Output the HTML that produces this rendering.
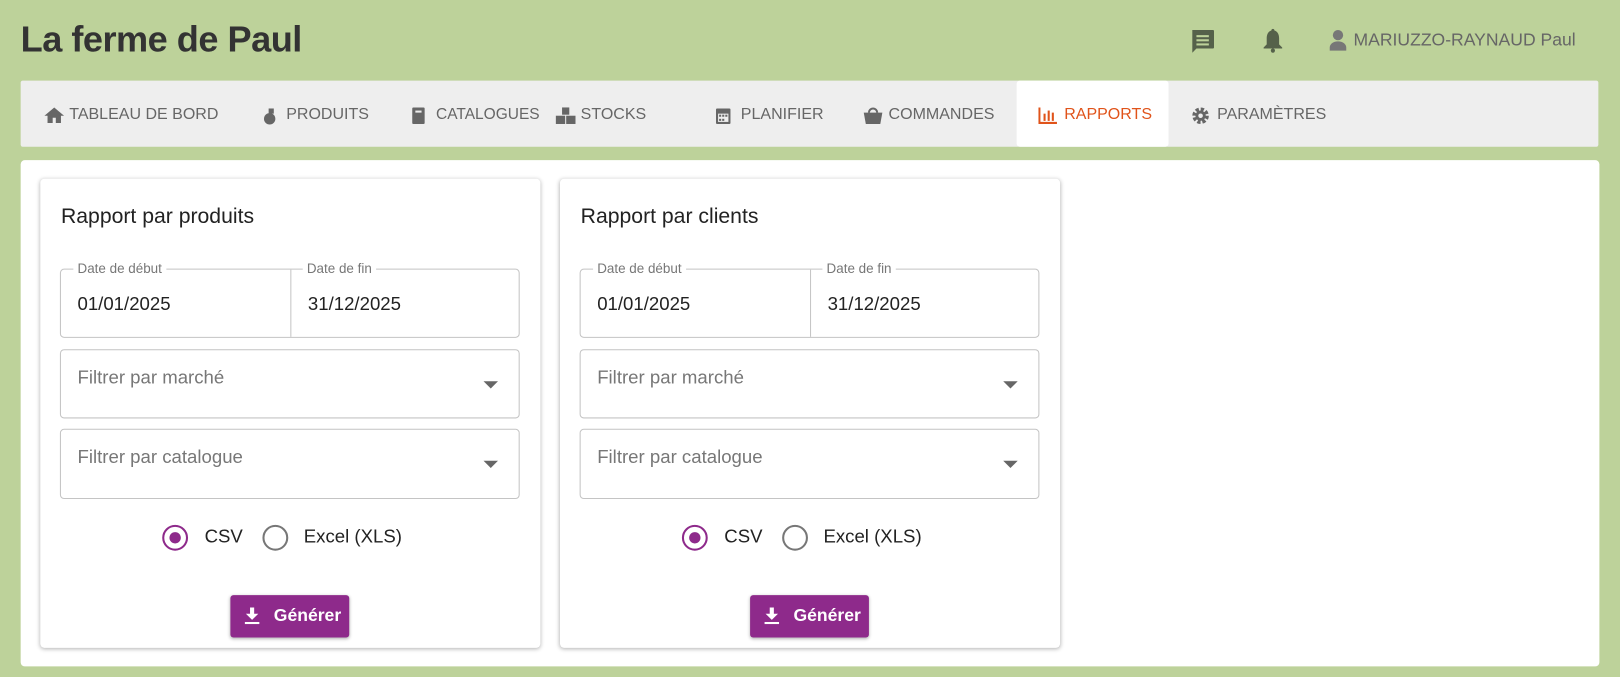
<!DOCTYPE html>
<html><head><meta charset="utf-8"><style>
*{box-sizing:border-box;margin:0;padding:0}
body{width:1620px;height:677px;background:#bdd29a;font-family:"Liberation Sans",sans-serif;position:relative;overflow:hidden;color:#333}
#w{position:absolute;left:0;top:0;width:1568px;height:655px;transform:scale(1.0332);transform-origin:0 0}
.title{position:absolute;left:20px;top:19px;font-size:35px;font-weight:bold;color:#333;letter-spacing:-0.5px}
.user{position:absolute;left:1286px;top:28px;font-size:17px;color:#666;display:flex;align-items:center;gap:6px}
.nav{position:absolute;left:20px;top:78px;width:1527px;height:64px;background:#eee;border-radius:2px}
.act{position:absolute;left:984px;top:78px;width:147px;height:64px;background:#fff;border-radius:3px}
.ni{position:absolute;top:102px;font-size:15.5px;color:#666;display:flex;align-items:center;white-space:nowrap}
.ni svg{position:absolute;left:-25px;top:1px}
.panel{position:absolute;left:20px;top:155px;width:1528px;height:490px;background:#fff;border-radius:4px}
.card{position:absolute;top:173px;width:484px;height:454px;background:#fff;border-radius:4px;box-shadow:0 1px 4px rgba(0,0,0,.3)}
.ct{position:absolute;left:20px;top:25px;font-size:20.5px;color:#222}
.box{position:absolute;border:1px solid #c4c4c4;border-radius:4px;left:19px;width:445px}
.lbl{position:absolute;top:-9px;font-size:13px;color:#777;background:#fff;padding:0 4px}
.val{position:absolute;top:23px;font-size:18px;color:#222}
.ph{position:absolute;left:16px;top:16px;font-size:18px;color:#777}
.arr{position:absolute;right:20px;top:30px;width:0;height:0;border-left:7px solid transparent;border-right:7px solid transparent;border-top:7px solid #666}
.rad{position:absolute;top:335px;width:25px;height:25px;border-radius:50%;border:2.5px solid #777}
.rad.on{border-color:#8e2a8b}
.rad.on::after{content:"";position:absolute;left:4.5px;top:4.5px;width:11px;height:11px;border-radius:50%;background:#8e2a8b}
.rt{position:absolute;top:336px;font-size:18px;color:#222}
.btn{position:absolute;left:184px;top:403px;width:115px;height:41px;background:#8e2a8b;border-radius:3px;color:#fff;font-weight:bold;font-size:17px;box-shadow:0 1px 3px rgba(0,0,0,.3)}
.btn span{position:absolute;left:42px;top:10px}
.btn svg{position:absolute;left:13px;top:11px}
</style></head><body><div id="w">
<div class="title">La ferme de Paul</div>
<svg style="position:absolute;left:1151px;top:28px" width="26" height="24" viewBox="0 0 26 24"><path d="M3 1h20a1 1 0 0 1 1 1v16a1 1 0 0 1-1 1H7l-4 4z" fill="#55614a"/><rect x="7" y="6" width="12" height="2" fill="#bdd29a"/><rect x="7" y="10" width="12" height="2" fill="#bdd29a"/><rect x="7" y="14" width="12" height="2" fill="#bdd29a"/></svg>
<svg style="position:absolute;left:1221px;top:27px" width="22" height="25" viewBox="0 0 22 25"><path d="M11 1c1 0 1.5.7 1.5 1.5C16 3.5 17 7 17 10v6l3 3v1H2v-1l3-3v-6c0-3 1-6.5 4.5-7.5C9.5 1.7 10 1 11 1z" fill="#55614a"/><circle cx="11" cy="22" r="2" fill="#55614a"/></svg>
<div class="user"><svg width="18" height="22" viewBox="0 0 18 22"><circle cx="9" cy="6" r="5" fill="#777"/><path d="M1 21v-3c0-3 3-6 8-6s8 3 8 6v3z" fill="#777"/></svg>MARIUZZO-RAYNAUD Paul</div>
<div class="nav"></div><div class="act"></div>
<div class="ni" style="left:67px"><svg width="21" height="17" viewBox="0 0 21 17"><path d="M10.5 1L1 9h3v7h5v-5h3v5h5V9h3z" fill="#666"/></svg>TABLEAU DE BORD</div>
<div class="ni" style="left:277px"><svg width="18" height="18" viewBox="0 0 18 18"><circle cx="9" cy="12" r="5.5" fill="#666"/><rect x="8" y="2" width="5" height="5" fill="#666"/></svg>PRODUITS</div>
<div class="ni" style="left:422px;font-size:15px"><svg width="16" height="18" viewBox="0 0 16 18"><rect x="2" y="1" width="12" height="16" rx="1" fill="#666"/><rect x="5" y="4" width="6" height="2" fill="#eee"/></svg>CATALOGUES</div>
<div class="ni" style="left:562px"><svg width="21" height="18" viewBox="0 0 21 18"><rect x="7" y="1" width="7" height="7" fill="#666"/><rect x="1" y="9" width="9" height="8" fill="#666"/><rect x="11" y="9" width="9" height="8" fill="#666"/></svg>STOCKS</div>
<div class="ni" style="left:717px"><svg width="16" height="18" viewBox="0 0 16 18"><rect x="1" y="2" width="14" height="15" rx="1" fill="#666"/><rect x="3" y="7" width="10" height="8" fill="#eee"/><rect x="4" y="8" width="2" height="2" fill="#666"/><rect x="7" y="8" width="2" height="2" fill="#666"/><rect x="10" y="8" width="2" height="2" fill="#666"/><rect x="4" y="12" width="2" height="2" fill="#666"/><rect x="7" y="12" width="2" height="2" fill="#666"/></svg>PLANIFIER</div>
<div class="ni" style="left:860px"><svg width="20" height="18" viewBox="0 0 20 18"><path d="M1 6h18l-2 11H3z" fill="#666"/><path d="M6 6a4 4 0 0 1 8 0" stroke="#666" stroke-width="2" fill="none"/></svg>COMMANDES</div>
<div class="ni" style="left:1030px;color:#e0531a"><svg width="19" height="17" viewBox="0 0 19 17"><path d="M1 1v15h17" stroke="#e0531a" stroke-width="2" fill="none"/><rect x="5" y="7" width="2" height="7" fill="#e0531a"/><rect x="9" y="4" width="2" height="10" fill="#e0531a"/><rect x="13" y="6" width="2" height="8" fill="#e0531a"/></svg>RAPPORTS</div>
<div class="ni" style="left:1178px"><svg width="18" height="18" viewBox="0 0 18 18"><circle cx="9" cy="9" r="6" fill="none" stroke="#666" stroke-width="4" stroke-dasharray="3 1.7"/><circle cx="9" cy="9" r="5" fill="#666"/><circle cx="9" cy="9" r="2.2" fill="#eee"/></svg>PARAMÈTRES</div>
<div class="panel"></div>

<div class="card" style="left:39px">
<div class="ct">Rapport par produits</div>
<div class="box" style="top:87px;height:67px"><div style="position:absolute;left:222px;top:0;bottom:0;border-left:1px solid #c4c4c4"></div>
<div class="lbl" style="left:12px">Date de début</div><div class="lbl" style="left:234px">Date de fin</div>
<div class="val" style="left:16px">01/01/2025</div><div class="val" style="left:239px">31/12/2025</div></div>
<div class="box" style="top:165px;height:67px"><div class="ph">Filtrer par marché</div><div class="arr"></div></div>
<div class="box" style="top:242px;height:68px"><div class="ph">Filtrer par catalogue</div><div class="arr"></div></div>
<div class="rad on" style="left:118px"></div><div class="rt" style="left:159px">CSV</div>
<div class="rad" style="left:215px"></div><div class="rt" style="left:255px">Excel (XLS)</div>
<div class="btn"><svg width="16" height="18" viewBox="0 0 16 18"><path d="M6 1h4v6h4l-6 6-6-6h4z" fill="#fff"/><rect x="1" y="15" width="14" height="2" fill="#fff"/></svg><span>Générer</span></div>
</div>

<div class="card" style="left:542px">
<div class="ct">Rapport par clients</div>
<div class="box" style="top:87px;height:67px"><div style="position:absolute;left:222px;top:0;bottom:0;border-left:1px solid #c4c4c4"></div>
<div class="lbl" style="left:12px">Date de début</div><div class="lbl" style="left:234px">Date de fin</div>
<div class="val" style="left:16px">01/01/2025</div><div class="val" style="left:239px">31/12/2025</div></div>
<div class="box" style="top:165px;height:67px"><div class="ph">Filtrer par marché</div><div class="arr"></div></div>
<div class="box" style="top:242px;height:68px"><div class="ph">Filtrer par catalogue</div><div class="arr"></div></div>
<div class="rad on" style="left:118px"></div><div class="rt" style="left:159px">CSV</div>
<div class="rad" style="left:215px"></div><div class="rt" style="left:255px">Excel (XLS)</div>
<div class="btn"><svg width="16" height="18" viewBox="0 0 16 18"><path d="M6 1h4v6h4l-6 6-6-6h4z" fill="#fff"/><rect x="1" y="15" width="14" height="2" fill="#fff"/></svg><span>Générer</span></div>
</div>
</div></body></html>
